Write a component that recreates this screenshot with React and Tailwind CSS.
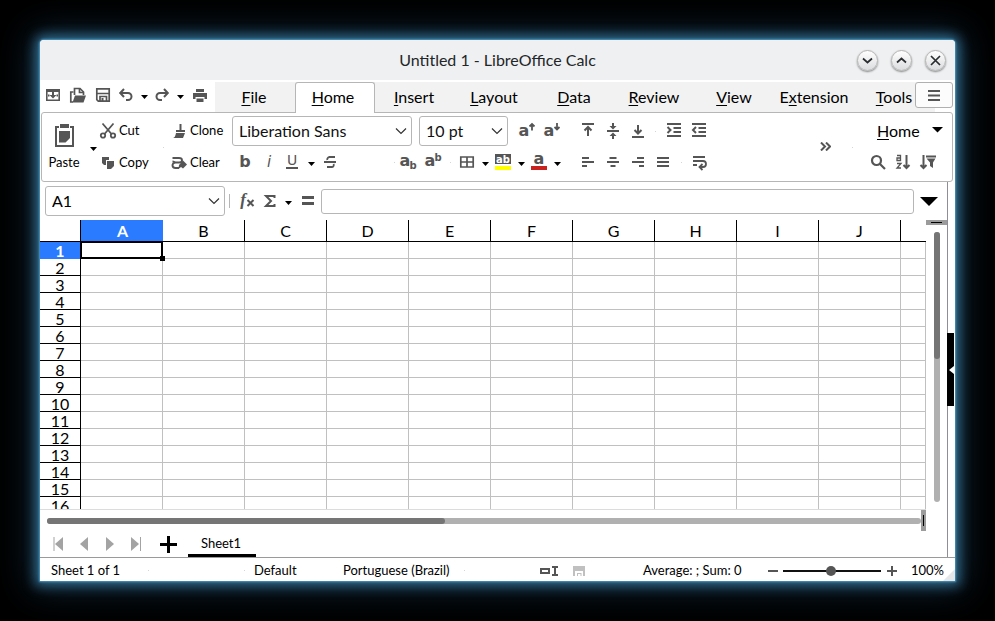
import React from "react";

const INK = "#555555";

function Icon({ children, size = "size-4", stroke = 2, box = "0 0 16 16" }) {
  return (
    <svg
      className={`${size} shrink-0 overflow-visible`}
      viewBox={box}
      fill="none"
      stroke={INK}
      strokeWidth={stroke}
      aria-hidden="true"
    >
      {children}
    </svg>
  );
}

function Glyph({ x, y, size = 15, weight = 700, italic, family = "DejaVu Sans", children }) {
  return (
    <text
      x={x}
      y={y}
      fontFamily={family}
      fontSize={size}
      fontWeight={weight}
      fontStyle={italic ? "italic" : "normal"}
      textAnchor="middle"
      fill={INK}
      stroke="none"
    >
      {children}
    </text>
  );
}

function Tool({ label, width = "w-[25px]", className = "", children }) {
  return (
    <button
      type="button"
      aria-label={label}
      className={`flex h-6 ${width} shrink-0 items-center justify-center ${className}`}
    >
      {children}
    </button>
  );
}

function Caret({ label, className = "" }) {
  return (
    <button type="button" aria-label={label} className={`flex h-6 w-3.5 shrink-0 items-center justify-center pt-1 ${className}`}>
      <svg className="h-1 w-[7px]" viewBox="0 0 7 4" fill="#000" aria-hidden="true">
        <path d="M0 0h7L3.5 4z" />
      </svg>
    </button>
  );
}

function BigCaret({ label, className = "" }) {
  return (
    <button type="button" aria-label={label} className={`flex shrink-0 items-center justify-center ${className}`}>
      <svg className="w-full" viewBox="0 0 16 8" fill="#000" aria-hidden="true">
        <path d="M0 0h16L8 8z" />
      </svg>
    </button>
  );
}

function Dot() {
  return <span className="size-px shrink-0 bg-gray-300" />;
}

function Chevron() {
  return (
    <svg className="h-2 w-3 shrink-0" viewBox="0 0 12 8" fill="none" stroke="#333" strokeWidth="1.2" aria-hidden="true">
      <path d="M1 1.5l5 5 5-5" />
    </svg>
  );
}

function Combo({ label, value, width }) {
  return (
    <div className={`relative h-[30px] shrink-0 ${width}`}>
      <select
        aria-label={label}
        className="h-full w-full appearance-none rounded-[3px] border border-[#b6b6b6] bg-white pl-1.5 text-base text-[#111]"
      >
        <option>{value}</option>
      </select>
      <span className="pointer-events-none absolute inset-y-0 right-[5px] flex items-center">
        <Chevron />
      </span>
    </div>
  );
}

function WindowButton({ label, d }) {
  return (
    <button
      type="button"
      aria-label={label}
      className="flex size-[21px] items-center justify-center rounded-full border border-[#b4b4b4] bg-linear-to-b from-white to-[#dcdddf] shadow-[0_1px_2px_rgba(0,0,0,0.45)]"
    >
      <svg className="size-[11px]" viewBox="0 0 11 11" fill="none" stroke="#2b2e30" strokeWidth="1.7" aria-hidden="true">
        <path d={d} />
      </svg>
    </button>
  );
}

function TitleBar() {
  return (
    <header className="grid h-10 shrink-0 grid-cols-[1fr_auto_1fr] items-center bg-[#eff0f1] px-[9px]">
      <span />
      <h1 className="text-base text-[#232629]">Untitled 1 - LibreOffice Calc</h1>
      <div className="flex justify-end gap-[13px]">
        <WindowButton label="Minimize" d="M1 3.500l4.500 4 4.500-4" />
        <WindowButton label="Maximize" d="M1 7.500l4.500-4 4.500 4" />
        <WindowButton label="Close" d="M1 1l9 9M10 1l-9 9" />
      </div>
    </header>
  );
}

function QuickAccess() {
  return (
    <div className="flex h-[26px] w-[175px] shrink-0 items-center">
      <Tool label="New">
        <Icon stroke={1.6}>
          <path d="M1 2h14v3H1z" fill={INK} stroke="none" />
          <path d="M1.800 5v8.200h3M14.200 5v8.200h-3M1.800 13.200h12.400" />
          <path d="M7 5h2v3h2.500L8 11.500 4.500 8H7z" fill={INK} stroke="none" />
          <path d="M3 7.500h1.500v2H3zM11.500 7.500H13v2h-1.500z" fill={INK} stroke="none" />
        </Icon>
      </Tool>
      <Tool label="Open">
        <Icon stroke={1.7}>
          <path d="M4.500 8V1.500h5.500l3.500 3.500v3" />
          <path d="M9.500 1v4.500H14" />
          <path d="M3.500 5H.8v10H3" />
          <path d="M5 8.500h11l-2.500 7H2.500z" fill={INK} stroke="none" />
        </Icon>
      </Tool>
      <Tool label="Save">
        <Icon stroke={1.7}>
          <path d="M1.800 1.800h12.400v12.400H3.300l-1.500-1.500z" />
          <path d="M2 6.500h12" />
          <path d="M5 14V9.500h6.500V14" />
          <path d="M6.500 11h2v3h-2z" fill={INK} stroke="none" />
        </Icon>
      </Tool>
      <Tool label="Undo" width="w-[22px]">
        <Icon stroke={2}>
          <path d="M2.500 6h7.500a3.500 3.500 0 0 1 0 7H8" />
          <path d="M6 2L2.200 6 6 10" />
        </Icon>
      </Tool>
      <Caret label="Undo list" />
      <Tool label="Redo" width="w-[22px]">
        <Icon stroke={2}>
          <path d="M13.500 6H6a3.500 3.500 0 0 0 0 7h2" />
          <path d="M10 2l3.800 4L10 10" />
        </Icon>
      </Tool>
      <Caret label="Redo list" />
      <Tool label="Print">
        <Icon>
          <path d="M4 2h8v3H4zM1 6h14v6h-2.500v-2h-9v2H1zM4.500 11.500h7V15h-7z" fill={INK} stroke="none" />
        </Icon>
      </Tool>
    </div>
  );
}

const TABS = [
  ["", "F", "ile"],
  ["", "H", "ome"],
  ["", "I", "nsert"],
  ["", "L", "ayout"],
  ["", "D", "ata"],
  ["", "R", "eview"],
  ["", "V", "iew"],
  ["E", "x", "tension"],
  ["", "T", "ools"],
];

function Mnemonic({ parts }) {
  return (
    <span>
      {parts[0]}
      <span className="underline decoration-1 underline-offset-2">{parts[1]}</span>
      {parts[2]}
    </span>
  );
}

function TabRow() {
  return (
    <div className="flex h-8 shrink-0 items-start bg-white pt-0.5">
      <QuickAccess />
      <nav className="flex h-[30px] shrink-0 bg-[#f2f2f2]">
        {TABS.map((parts) => {
          const active = parts[1] === "H";
          return (
            <button
              key={parts.join("")}
              type="button"
              className={
                active
                  ? "z-10 -mb-px flex h-[31px] w-20 items-center justify-center rounded-t-[3px] border border-b-0 border-[#b6b6b6] bg-white pr-1 pb-0.5 text-base leading-5"
                  : "flex h-[30px] w-20 items-center justify-center pr-0.5 text-base leading-5"
              }
            >
              <Mnemonic parts={parts} />
            </button>
          );
        })}
      </nav>
      <button
        type="button"
        aria-label="Menu"
        className="z-10 -ml-5 flex h-[26px] w-[38px] shrink-0 items-center justify-center rounded-[3px] border border-[#b0b0b0] bg-[#fcfcfc]"
      >
        <svg className="h-[11px] w-3" viewBox="0 0 12 11" fill={INK} aria-hidden="true">
          <path d="M0 0h12v2H0zM0 4.500h12v2H0zM0 9h12v2H0z" />
        </svg>
      </button>
    </div>
  );
}

function LabelTool({ label, icon }) {
  return (
    <button type="button" className="flex h-[29px] items-center gap-[3px] text-[13px]">
      {icon}
      {label}
    </button>
  );
}

function AlignIcon({ d }) {
  return (
    <Icon>
      <path d={d} />
    </Icon>
  );
}

function FormatTools() {
  return (
    <div className="shrink-0">
      <div className="flex h-[30px] items-center">
        <Combo label="Font name" value="Liberation Sans" width="w-[180px]" />
        <span className="w-[7px]" />
        <Combo label="Font size" value="10 pt" width="w-[89px]" />
        <span className="w-1.5" />
        <Tool label="Increase size">
          <Icon stroke={1.8}>
            <Glyph x={5} y={13} size={16}>a</Glyph>
            <path d="M13 7.500V1M10.500 3.500L13 1l2.500 2.500" />
          </Icon>
        </Tool>
        <Tool label="Decrease size">
          <Icon stroke={1.8}>
            <Glyph x={5} y={13} size={16}>a</Glyph>
            <path d="M13 0v6.500M10.500 4L13 6.500 15.500 4" />
          </Icon>
        </Tool>
        <span className="w-[11px]" />
        <Tool label="Align top">
          <AlignIcon d="M2 1h12M8 13V4M4.500 7.500L8 4l3.500 3.500" />
        </Tool>
        <Tool label="Center vertically">
          <Icon>
            <path d="M2 8h12" />
            <path d="M7 0h2v3h2.500L8 6.500 4.500 3H7zM7 16h2v-3h2.500L8 9.500 4.500 13H7z" fill={INK} stroke="none" />
          </Icon>
        </Tool>
        <Tool label="Align bottom">
          <AlignIcon d="M2 14h12M8 2v8.500M4.500 7L8 10.500 11.500 7" />
        </Tool>
        <span className="flex w-[11px] justify-center">
          <Dot />
        </span>
        <Tool label="Increase indent">
          <AlignIcon d="M1 1h14M7.500 5H15M7.500 9H15M1 13h14M1.500 4l3 3-3 3" />
        </Tool>
        <Tool label="Decrease indent">
          <AlignIcon d="M1 1h14M7.500 5H15M7.500 9H15M1 13h14M5 4L2 7l3 3" />
        </Tool>
      </div>
      <div className="flex h-8 items-center">
        <Tool label="Bold">
          <Icon>
            <Glyph x={8} y={13} size={16}>b</Glyph>
          </Icon>
        </Tool>
        <Tool label="Italic">
          <Icon>
            <Glyph x={7} y={13} size={15} italic weight={400}>i</Glyph>
          </Icon>
        </Tool>
        <Tool label="Underline" width="w-[22px]">
          <Icon stroke={2}>
            <Glyph x={7} y={11} size={14} weight={400}>U</Glyph>
            <path d="M1 14h12" />
          </Icon>
        </Tool>
        <Caret label="Underline style" />
        <Tool label="Strikethrough">
          <Icon stroke={1.8}>
            <path d="M12 3H6.500A2.500 2.500 0 0 0 4.300 6M1 8h12M10.500 10a2 2 0 0 1-2 3H4" />
          </Icon>
        </Tool>
        <span className="flex w-[52px] justify-end">
          <Dot />
        </span>
        <Tool label="Subscript">
          <Icon>
            <Glyph x={5} y={12} size={16}>a</Glyph>
            <Glyph x={13} y={15} size={10}>b</Glyph>
          </Icon>
        </Tool>
        <Tool label="Superscript">
          <Icon>
            <Glyph x={5} y={12} size={16}>a</Glyph>
            <Glyph x={13} y={7} size={10}>b</Glyph>
          </Icon>
        </Tool>
        <span className="flex w-[11px] justify-center">
          <Dot />
        </span>
        <Tool label="Borders" width="w-[22px]">
          <Icon stroke={1.7}>
            <path d="M1.800 3h12.400v10H1.800zM8 3v10M1.800 8h12.400" />
          </Icon>
        </Tool>
        <Caret label="Border style" />
        <Tool label="Background color" width="w-[22px]">
          <Icon>
            <path d="M0 0h16v10H0z" fill={INK} stroke="none" />
            <text x="8" y="8.500" fontFamily="DejaVu Sans" fontSize="10" fontWeight="700" textAnchor="middle" fill="#fff" stroke="none">ab</text>
            <path d="M0 12h16v4H0z" fill="#ffff00" stroke="none" />
          </Icon>
        </Tool>
        <Caret label="Background colors" />
        <Tool label="Font color" width="w-[22px]">
          <Icon>
            <Glyph x={8} y={10} size={16}>a</Glyph>
            <path d="M0 12h16v4H0z" fill="#c9211e" stroke="none" />
          </Icon>
        </Tool>
        <Caret label="Font colors" />
        <span className="w-[11px]" />
        <Tool label="Align left">
          <AlignIcon d="M2 4h7M2 8h12M2 12h5" />
        </Tool>
        <Tool label="Center">
          <AlignIcon d="M4.500 4h7M2 8h12M5.500 12h5" />
        </Tool>
        <Tool label="Align right">
          <AlignIcon d="M7 4h7M2 8h12M9 12h5" />
        </Tool>
        <Tool label="Justify">
          <AlignIcon d="M2 4h12M2 8h12M2 12h12" />
        </Tool>
        <span className="flex w-3 justify-center">
          <Dot />
        </span>
        <Tool label="Wrap text">
          <Icon stroke={1.8}>
            <path d="M1 3h12M1 7h10a3 3 0 0 1 0 6H8M1 11h4M10.500 10L7.500 13l3 3" />
          </Icon>
        </Tool>
      </div>
    </div>
  );
}

function Ribbon() {
  return (
    <section className="mr-0.5 ml-px flex h-[70px] shrink-0 items-start rounded-[3px] border border-[#b6b6b6] bg-white pt-[3px]">
      <button type="button" className="flex w-11 shrink-0 flex-col items-center pt-2 text-[13px]">
        <svg className="h-[23px] w-[19px]" viewBox="0 0 19 23" fill="none" stroke={INK} strokeWidth="2" aria-hidden="true">
          <path d="M4 3H1v19h17V3h-3" />
          <path d="M5 0h9v4H5zM4 7h11v7l-4.500 4.500H4z" fill={INK} stroke="none" />
        </svg>
        <span className="pt-[5px] leading-5">Paste</span>
      </button>
      <span className="flex h-[62px] w-3.5 items-center">
        <Caret label="Paste options" />
      </span>
      <div className="flex w-[63px] shrink-0 flex-col gap-[3px]">
        <LabelTool
          label="Cut"
          icon={
            <Icon stroke={1.8}>
              <circle cx="3" cy="12.500" r="2.200" />
              <circle cx="13" cy="12.500" r="2.200" />
              <path d="M2.500 0.500l9 10.500M13.500 0.500L4.500 11" />
            </Icon>
          }
        />
        <LabelTool
          label="Copy"
          icon={
            <Icon>
              <path d="M2 2h7v3H6v5H4L2 8z" fill={INK} stroke="none" />
              <path d="M7 6h7v5l-3 3H7z" fill={INK} stroke="none" />
            </Icon>
          }
        />
      </div>
      <span className="flex h-[62px] w-2 items-center">
        <Dot />
      </span>
      <div className="flex w-[61px] shrink-0 flex-col gap-[3px]">
        <LabelTool
          label="Clone"
          icon={
            <Icon>
              <path d="M8.500 1h2v6H14v2H5V7h3.500zM5 10h9l-2 5H1.500c2 0 3-2 3.500-5z" fill={INK} stroke="none" />
            </Icon>
          }
        />
        <LabelTool
          label="Clear"
          icon={
            <Icon stroke={1.9}>
              <path d="M1.500 3H8c4 0 4 4.500 0 4.500H4.500c-4 0-4 5.500 0 5.500H8M1.500 6.500c2 0 2 1 4 1" />
              <path d="M12 5.500l4 4-4 4-2-1.500-2.500 2L8 10z" fill={INK} stroke="none" />
            </Icon>
          }
        />
      </div>
      <FormatTools />
      <div className="flex min-w-0 flex-1 items-start justify-end">
        <button type="button" aria-label="More commands" className="flex h-[60px] w-3.5 items-center justify-center">
          <svg className="h-[9px] w-[11px]" viewBox="0 0 11 9" fill="none" stroke={INK} strokeWidth="2" aria-hidden="true">
            <path d="M1 .5l4 4-4 4M6 .5l4 4-4 4" />
          </svg>
        </button>
        <span className="flex h-[62px] w-[21px] items-center justify-end">
          <Dot />
        </span>
        <div className="ml-3 w-[87px]">
          <div className="flex h-[30px] items-center justify-between pr-[9px] pl-3 text-base leading-5">
            <button type="button">
              <Mnemonic parts={["", "H", "ome"]} />
            </button>
            <BigCaret label="Tab menu" className="mb-0.5 w-[11px]" />
          </div>
          <div className="flex h-8 items-center">
            <Tool label="Find">
              <Icon stroke={2.2}>
                <circle cx="6.500" cy="6.500" r="4.500" />
                <path d="M9.500 9.500l5.500 5.500" />
              </Icon>
            </Tool>
            <Tool label="Sort">
              <Icon stroke={2}>
                <path d="M2 1.500h3.500v5H2V4h3M2 9.500h4L2 14h4" strokeWidth="1.3" />
                <path d="M11.500 1v13M8.500 11l3 3 3-3" />
              </Icon>
            </Tool>
            <Tool label="AutoFilter">
              <Icon stroke={2}>
                <path d="M3.500 1v13M.5 11l3 3 3-3" />
                <path d="M6 1.500h10v2H6zM6.500 4.500h9L13 8.500V14l-3-2V8.500z" fill={INK} stroke="none" />
              </Icon>
            </Tool>
          </div>
        </div>
      </div>
    </section>
  );
}

function FormulaBar() {
  return (
    <div className="flex h-[38px] shrink-0 items-center pr-[9px] pl-[5px]">
      <div className="flex h-[30px] w-[180px] shrink-0 items-center rounded-[3px] border border-[#b6b6b6] bg-white pr-1">
        <input aria-label="Name box" defaultValue="A1" className="min-w-0 flex-1 pl-1.5 text-base outline-none" />
        <button type="button" aria-label="Name list">
          <Chevron />
        </button>
      </div>
      <span className="mx-1 h-3.5 w-px shrink-0 bg-[#b6b6b6]" />
      <Tool label="Function wizard">
        <Icon stroke={2}>
          <Glyph x={4} y={12} size={17} italic family="Liberation Serif">f</Glyph>
          <path d="M8.500 7l6 6M14.500 7l-6 6" />
        </Icon>
      </Tool>
      <Tool label="Select function" width="w-[22px]">
        <Icon stroke={2}>
          <path d="M12.500 5V3H4l5 5-5 5h8.500v-2" />
        </Icon>
      </Tool>
      <Caret label="Function list" />
      <Tool label="Formula">
        <Icon stroke={3}>
          <path d="M2 4.500h12M2 10.500h12" />
        </Icon>
      </Tool>
      <input
        aria-label="Formula"
        className="ml-px h-[25px] min-w-0 flex-1 rounded-[3px] border border-[#b6b6b6] bg-white px-1.5 text-base outline-none"
      />
      <BigCaret label="Expand formula bar" className="ml-1.5 w-[18px]" />
    </div>
  );
}

const COLUMNS = ["A", "B", "C", "D", "E", "F", "G", "H", "I", "J", ""];
const ROWS = Array.from({ length: 16 }, (_, i) => i + 1);

function Sheet() {
  return (
    <div className="min-h-0 flex-1 overflow-hidden border-b border-[#dcdcdc]">
      <table className="w-full table-fixed border-separate border-spacing-0 text-base leading-[14px]">
        <colgroup>
          <col className="w-[41px]" />
          {COLUMNS.map((name) => (
            <col key={name} className={name ? "w-[82px]" : ""} />
          ))}
        </colgroup>
        <thead>
          <tr className="h-[22px]">
            <th aria-label="Select all" className="border-r border-b border-black p-0" />
            {COLUMNS.map((name) => (
              <th
                key={name}
                scope="col"
                className={
                  name === "A"
                    ? "border-r border-b border-r-[#2a7bff] border-b-black bg-[#2a7bff] p-0 pl-0.5 font-bold text-white"
                    : name
                      ? "border-r border-b border-black p-0 font-normal"
                      : "border-b border-black p-0"
                }
              >
                {name}
              </th>
            ))}
          </tr>
        </thead>
        <tbody>
          {ROWS.map((row) => (
            <tr key={row} className="h-[17px]">
              <th
                scope="row"
                className={
                  row === 1
                    ? "border-r border-b border-r-black border-b-[#2a7bff] bg-[#2a7bff] p-0 pt-0.5 font-bold text-white"
                    : "border-r border-b border-black p-0 pt-0.5 font-normal"
                }
              >
                {row}
              </th>
              {COLUMNS.map((name) => (
                <td key={name} className="relative border-r border-b border-[#c0c0c0] p-0">
                  {row === 1 && name === "A" && (
                    <span className="absolute -inset-px z-10 border-2 border-black">
                      <span className="absolute -right-1 -bottom-1 size-[5px] bg-black" />
                    </span>
                  )}
                </td>
              ))}
            </tr>
          ))}
        </tbody>
      </table>
    </div>
  );
}

function VerticalScroll() {
  return (
    <div className="flex w-[21px] shrink-0 flex-col items-center">
      <div className="flex h-[5px] w-full items-center justify-center bg-[#9b9b9b]">
        <span className="h-px w-[11px] bg-black" />
      </div>
      <div className="mt-[7px] mb-2 w-1.5 flex-1 rounded-full bg-[#b0b0b0]">
        <div className="h-[47%] rounded-full bg-[#757575]" />
      </div>
    </div>
  );
}

function HorizontalScroll() {
  return (
    <div className="mr-[21px] flex h-[21px] shrink-0 items-center pl-[7px]">
      <div className="h-1.5 flex-1 rounded-full bg-[#b0b0b0]">
        <div className="h-full w-[45.5%] rounded-full bg-[#757575]" />
      </div>
      <div className="flex h-full w-[5px] items-center justify-center bg-[#9b9b9b]">
        <span className="h-[11px] w-px bg-black" />
      </div>
    </div>
  );
}

const NAV = [
  ["First sheet", "M4 1v14", "M13 1v14L5 8z"],
  ["Previous sheet", "", "M12 1v14L4 8z"],
  ["Next sheet", "", "M4 1v14l8-7z"],
  ["Last sheet", "M12.500 1v14", "M3 1v14l8-7z"],
];

function SheetTabs() {
  return (
    <div className="flex h-[26px] shrink-0 items-center pl-[5px]">
      {NAV.map(([label, line, arrow]) => (
        <Tool key={label} label={label} width="w-[26px]">
          <svg className="size-4" viewBox="0 0 16 16" aria-hidden="true">
            {line && <path d={line} stroke="#a3a3a3" />}
            <path d={arrow} fill="#a3a3a3" />
          </svg>
        </Tool>
      ))}
      <Tool label="Add sheet" width="w-[39px]">
        <svg className="size-[17px]" viewBox="0 0 17 17" stroke="#000" strokeWidth="3" aria-hidden="true">
          <path d="M8.500 0v17M0 8.500h17" />
        </svg>
      </Tool>
      <button type="button" className="h-full w-[68px] border-b-3 border-black pt-0.5 pr-0.5 text-[13px]">
        Sheet1
      </button>
    </div>
  );
}

function StatusBar() {
  return (
    <footer className="flex h-6 shrink-0 items-center border-t border-[#9a9a9a] pt-0.5 pl-[11px] text-[13px]">
      <span className="w-[97px]">Sheet 1 of 1</span>
      <Dot />
      <span className="w-[95px]" />
      <Dot />
      <span className="w-[98px] pl-[9px]">Default</span>
      <span className="w-[121px]">Portuguese (Brazil)</span>
      <Dot />
      <span className="w-[75px]" />
      <svg className="h-2.5 w-[18px] shrink-0" viewBox="0 0 18 10" fill="none" stroke={INK} strokeWidth="2" aria-label="Insert mode">
        <path d="M1 3h8v4H1z" />
        <path d="M12 1h6M12 9h6M15 1v8" />
      </svg>
      <svg className="ml-[15px] h-2.5 w-3 shrink-0" viewBox="0 0 12 10" aria-label="Document saved">
        <path d="M0 0h12v10h-2V5H2v5H0zM4 7h4.500v3H7.500V8H5v2H4z" fill="#c0c0c0" />
      </svg>
      <span className="ml-auto w-[98px] shrink-0 whitespace-nowrap">Average: ; Sum: 0</span>
      <div className="ml-[27px] flex shrink-0 items-center">
        <button type="button" aria-label="Zoom out" className="flex w-[11px] items-center">
          <span className="h-0.5 w-2.5 bg-[#555555]" />
        </button>
        <input
          type="range"
          aria-label="Zoom"
          defaultValue="49"
          className="mx-1 h-2.5 w-[98px] appearance-none bg-[linear-gradient(#111,#111)] bg-size-[100%_2px] bg-center bg-no-repeat [&::-webkit-slider-thumb]:size-2.5 [&::-webkit-slider-thumb]:appearance-none [&::-webkit-slider-thumb]:rounded-full [&::-webkit-slider-thumb]:bg-[#555555]"
        />
        <button type="button" aria-label="Zoom in" className="flex size-3 items-center justify-end">
          <svg className="size-2.5" viewBox="0 0 10 10" stroke={INK} strokeWidth="2" aria-hidden="true">
            <path d="M5 0v10M0 5h10" />
          </svg>
        </button>
      </div>
      <span className="z-10 ml-3.5 w-9 shrink-0">100%</span>
      <svg className="-ml-1 size-3 shrink-0 self-end" viewBox="0 0 12 12" aria-hidden="true">
        <path d="M12 0v12H0z" fill="#e4e6e8" />
      </svg>
    </footer>
  );
}

export default function App() {
  return (
    <div className="flex h-screen bg-black p-10 font-[Lato,sans-serif] text-black">
      <main className="flex min-w-0 flex-1 flex-col overflow-hidden rounded-t-[4px] bg-white shadow-[0_0_2px_1px_#4a97be,0_0_12px_5px_rgba(61,130,170,0.75),0_0_34px_8px_rgba(40,100,145,0.4)]">
        <TitleBar />
        <TabRow />
        <Ribbon />
        <div className="flex min-h-0 flex-1">
          <div className="flex min-w-0 flex-1 flex-col">
            <FormulaBar />
            <div className="flex min-h-0 flex-1">
              <Sheet />
              <VerticalScroll />
            </div>
            <HorizontalScroll />
            <SheetTabs />
          </div>
          <aside className="flex w-2 shrink-0 items-center border-l border-[#8e8e96]">
            <button type="button" aria-label="Show sidebar" className="-ml-px flex h-[73px] w-[7px] items-center justify-end bg-black">
              <svg className="h-2 w-[5px]" viewBox="0 0 5 8" fill="#fff" aria-hidden="true">
                <path d="M5 0v8L0 4z" />
              </svg>
            </button>
          </aside>
        </div>
        <StatusBar />
      </main>
    </div>
  );
}
